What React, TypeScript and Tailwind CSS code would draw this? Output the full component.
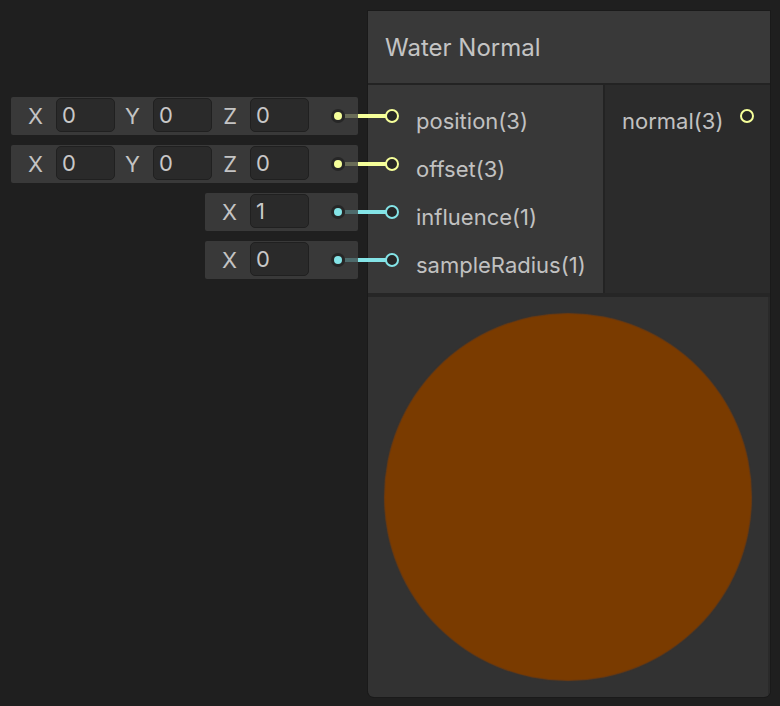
import React from 'react'

const YELLOW = '#f6ff9a'
const CYAN = '#84e4e7'

type InputRow = { fields: { axis: string; value: string }[]; kind: 'vec3' | 'vec1' }

const INPUT_ROWS: InputRow[] = [
  { kind: 'vec3', fields: [{ axis: 'X', value: '0' }, { axis: 'Y', value: '0' }, { axis: 'Z', value: '0' }] },
  { kind: 'vec3', fields: [{ axis: 'X', value: '0' }, { axis: 'Y', value: '0' }, { axis: 'Z', value: '0' }] },
  { kind: 'vec1', fields: [{ axis: 'X', value: '1' }] },
  { kind: 'vec1', fields: [{ axis: 'X', value: '0' }] },
]

const PORTS = [
  { name: 'position(3)', kind: 'vec3' },
  { name: 'offset(3)', kind: 'vec3' },
  { name: 'influence(1)', kind: 'vec1' },
  { name: 'sampleRadius(1)', kind: 'vec1' },
]

function InlineInput({ row }: { row: InputRow }) {
  const color = row.kind === 'vec3' ? YELLOW : CYAN
  return (
    <div className="relative flex h-[38px] items-center rounded-[2px] bg-[#393939] pl-[7px]">
      {row.fields.map((f, i) => (
        <div key={i} className="flex items-center">
          <span className="w-[38px] pr-[13px] text-right text-[22px] text-[#c4c4c4]">{f.axis}</span>
          <div className="mb-[2px] flex h-[34px] w-[59px] items-center rounded-[5px] border border-[#202020] bg-[#2a2a2a] pl-[5px] text-[22px] text-[#c8c8c8]">
            {f.value}
          </div>
        </div>
      ))}
      {/* port dot + dim stub */}
      <div className="ml-[22px] flex h-[14px] w-[14px] items-center justify-center rounded-full bg-[#262626]">
        <div className="h-[8px] w-[8px] rounded-full" style={{ backgroundColor: color }} />
      </div>
      <div
        className="h-[4px] w-[13px]"
        style={{ backgroundColor: row.kind === 'vec3' ? '#6a6d58' : '#4e6a6b' }}
      />
      {/* edge into the node */}
      <div
        className="absolute left-full top-1/2 h-[4px] w-[28px] -translate-y-1/2"
        style={{ backgroundColor: color }}
      />
    </div>
  )
}

function PortCircle({ color }: { color: string }) {
  return (
    <div
      className="h-[14px] w-[14px] shrink-0 rounded-full border-2 bg-[#262626]"
      style={{ borderColor: color }}
    />
  )
}

export default function App() {
  return (
    <div
      className="relative h-[706px] w-[780px] overflow-hidden bg-[#1f1f1f]"
      style={{ fontFamily: 'Inter, "Noto Sans", sans-serif' }}
    >
      {/* Inline input fields */}
      <div className="absolute right-[422px] top-[97px] z-10 flex flex-col items-end gap-[10px]">
        {INPUT_ROWS.map((row, i) => (
          <InlineInput key={i} row={row} />
        ))}
      </div>

      {/* Node */}
      <div className="absolute left-[368px] top-[11px] flex w-[402px] flex-col overflow-hidden rounded-b-[6px] shadow-[0_0_0_1px_#1a1a1a]">
        <div className="flex h-[72px] items-center bg-[#393939] px-[17px] pt-[2px] text-[24px] text-[#c4c4c4]">
          Water Normal
        </div>
        <div className="h-[2px] bg-[#232323]" />
        <div className="flex h-[208px]">
          <div className="flex w-[235px] flex-col bg-[#383838] pt-[7px]">
            {PORTS.map((p) => (
              <div key={p.name} className="flex h-[48px] items-center pl-[17px]">
                <PortCircle color={p.kind === 'vec3' ? YELLOW : CYAN} />
                <span className="ml-[17px] whitespace-nowrap pt-[10px] text-[22px] text-[#c1c1c1]">{p.name}</span>
              </div>
            ))}
          </div>
          <div className="w-[2px] bg-[#232323]" />
          <div className="flex flex-1 flex-col bg-[#2b2b2b] pt-[7px]">
            <div className="flex h-[48px] items-center pl-[17px]">
              <span className="pt-[10px] text-[22px] text-[#c1c1c1]">normal(3)</span>
              <div className="ml-[17px]">
                <PortCircle color={YELLOW} />
              </div>
            </div>
          </div>
        </div>
        <div className="h-[4px] bg-[#262626]" />
        <div className="flex h-[400px] items-center justify-center border-r-2 border-[#2a2a2a] bg-[#323232]">
          <div className="h-[366px] w-[366px] rounded-full bg-[#7a3b00] shadow-[0_0_1px_1px_#6e3a0e]" />
        </div>
      </div>
    </div>
  )
}
